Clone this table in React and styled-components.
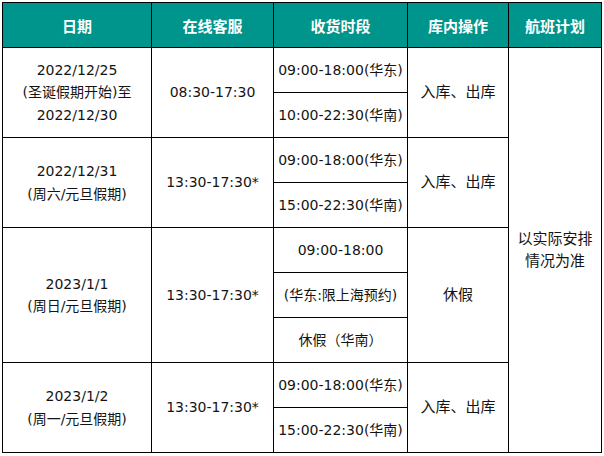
import styled, { createGlobalStyle } from "styled-components";

const GlobalStyle = createGlobalStyle`
  html, body {
    margin: 0;
    padding: 0;
    background: #fff;
  }
  body {
    font-family: "DejaVu Sans", "Noto Sans CJK SC", sans-serif;
  }
`;

const Page = styled.div`
  padding: 2px 0 0 2px;
`;

const Table = styled.div`
  display: inline-grid;
  grid-template-columns: 148px 121px 133px 100px 92px;
  grid-template-rows: repeat(10, 44px);
  gap: 1px;
  padding: 1px;
  background: #000;
`;

const HeadCell = styled.div`
  display: flex;
  align-items: center;
  justify-content: center;
  background: #00958c;
  color: #fff;
  font-size: 15px;
  font-weight: bold;
  grid-column: ${(p) => p.$col};
  grid-row: 1;
`;

const Cell = styled.div`
  display: flex;
  align-items: center;
  justify-content: center;
  text-align: center;
  background: #fff;
  color: #141414;
  font-size: ${(p) => p.$size || 14}px;
  line-height: 22.5px;
  grid-column: ${(p) => p.$col};
  grid-row: ${(p) => p.$row} / span ${(p) => p.$span || 1};
`;

const heads = ["日期", "在线客服", "收货时段", "库内操作", "航班计划"];

const groups = [
  {
    date: ["2022/12/25", "(圣诞假期开始)至", "2022/12/30"],
    service: "08:30-17:30",
    slots: ["09:00-18:00(华东)", "10:00-22:30(华南)"],
    ops: "入库、出库",
  },
  {
    date: ["2022/12/31", "(周六/元旦假期)"],
    service: "13:30-17:30*",
    slots: ["09:00-18:00(华东)", "15:00-22:30(华南)"],
    ops: "入库、出库",
  },
  {
    date: ["2023/1/1", "(周日/元旦假期)"],
    service: "13:30-17:30*",
    slots: ["09:00-18:00", "(华东:限上海预约)", "休假（华南）"],
    ops: "休假",
  },
  {
    date: ["2023/1/2", "(周一/元旦假期)"],
    service: "13:30-17:30*",
    slots: ["09:00-18:00(华东)", "15:00-22:30(华南)"],
    ops: "入库、出库",
  },
];

function Lines({ items }) {
  return (
    <div>
      {items.map((t, i) => (
        <div key={i}>{t}</div>
      ))}
    </div>
  );
}

export default function App() {
  let row = 2;
  const body = [];
  groups.forEach((g, gi) => {
    const span = g.slots.length;
    body.push(
      <Cell key={`d${gi}`} $col={1} $row={row} $span={span}>
        <Lines items={g.date} />
      </Cell>,
      <Cell key={`s${gi}`} $col={2} $row={row} $span={span}>
        {g.service}
      </Cell>,
      ...g.slots.map((s, si) => (
        <Cell key={`t${gi}-${si}`} $col={3} $row={row + si}>
          {s}
        </Cell>
      )),
      <Cell key={`o${gi}`} $col={4} $row={row} $span={span} $size={15}>
        {g.ops}
      </Cell>
    );
    row += span;
  });

  return (
    <Page>
      <GlobalStyle />
      <Table>
        {heads.map((h, i) => (
          <HeadCell key={h} $col={i + 1}>
            {h}
          </HeadCell>
        ))}
        {body}
        <Cell $col={5} $row={2} $span={9} $size={15}>
          <Lines items={["以实际安排", "情况为准"]} />
        </Cell>
      </Table>
    </Page>
  );
}
